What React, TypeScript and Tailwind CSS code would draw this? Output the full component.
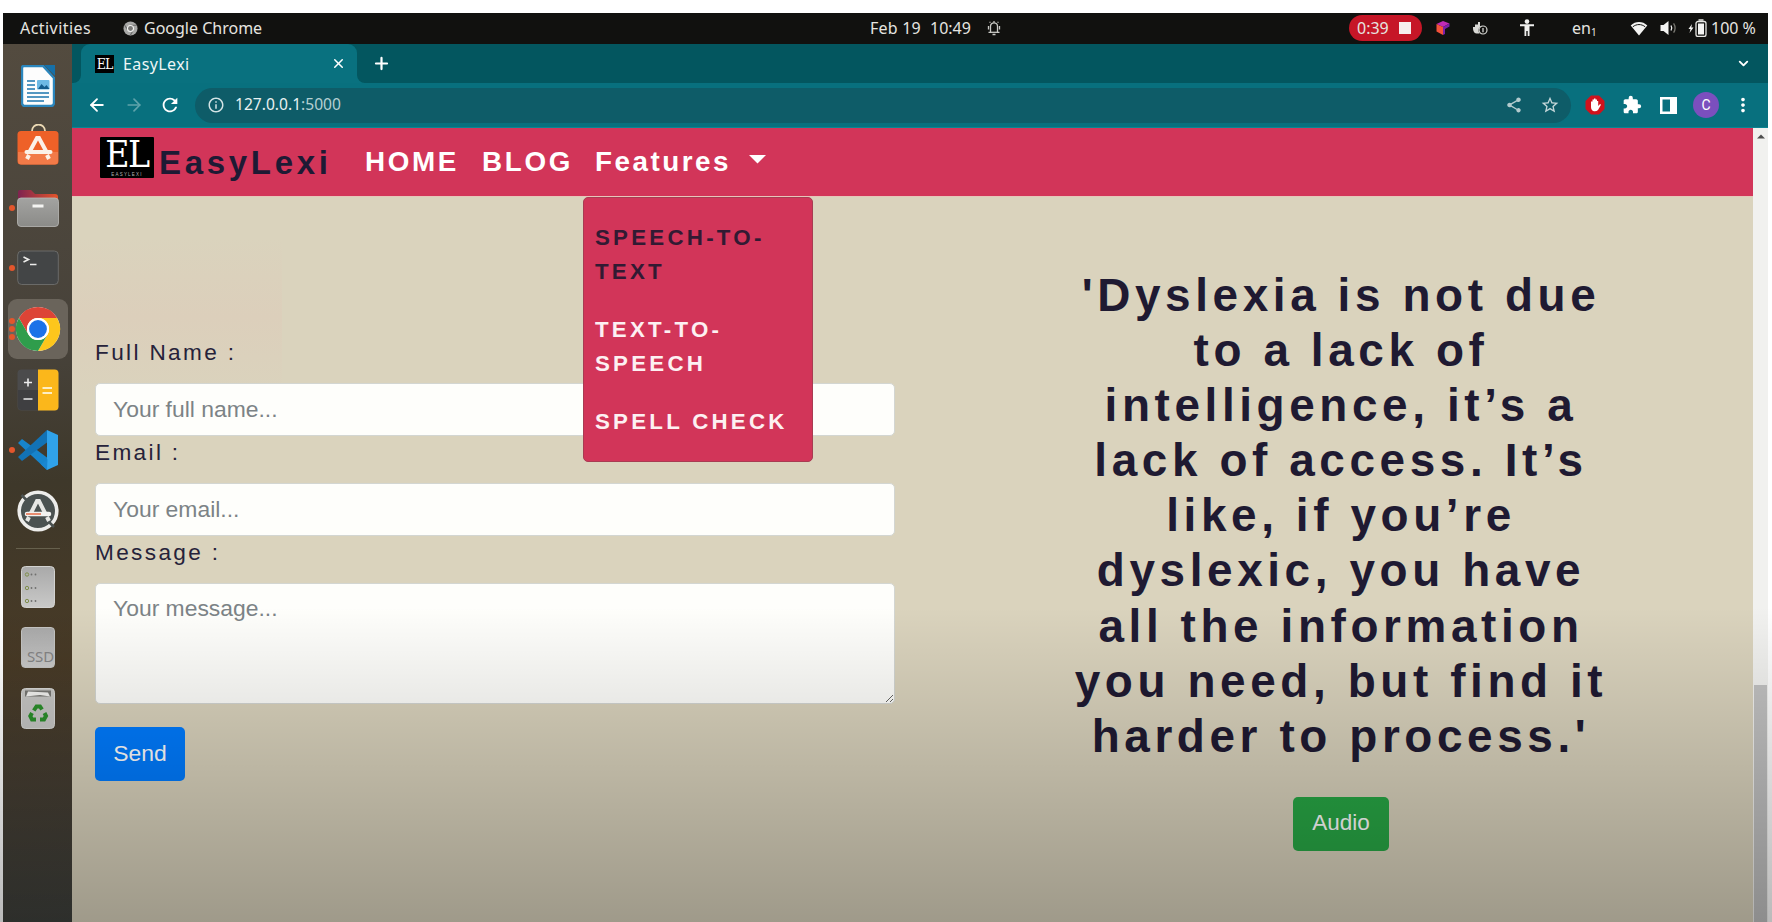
import React from "react";
import { ArrowLeft, ArrowRight, X, Plus, ChevronDown } from "lucide-react";
import { MdExtension, MdRefresh, MdShare, MdStarBorder, MdMoreVert, MdInfoOutline } from "react-icons/md";

const ubuntu = "font-['Noto_Sans',sans-serif]";

function TopBar() {
  return (
    <header className={`flex h-[31px] shrink-0 items-center bg-[#11110f] pb-px text-[16px] leading-none text-[#e6e5e0] ${ubuntu}`}>
      <div className="flex w-[841px] items-center pl-[17px]">
        <span className="w-[103px] tracking-[0.45px]">Activities</span>
        <svg className="mr-[6px]" width="15" height="15" viewBox="0 0 16 16">
          <circle cx="8" cy="8" r="7.5" fill="#a9a9a7" />
          <path d="M8 4.5h7M5 9.5 1.6 4.2M11 9.8 7.6 15.4" stroke="#6b6b69" strokeWidth="1.2" />
          <circle cx="8" cy="8" r="3.8" fill="#f2f2f0" />
          <circle cx="8" cy="8" r="2.6" fill="#777775" />
        </svg>
        <span>Google Chrome</span>
      </div>
      <div className="flex w-[505px] items-center pl-[26px]">
        <span className="w-[60px] tracking-[0.2px]">Feb 19</span>
        <span>10:49</span>
        <svg className="ml-4" width="14" height="16" viewBox="0 0 14 16" fill="none" stroke="#c9c9c5" strokeWidth="1.3">
          <path d="M1.500 12.300h2v-6a3.500 3.500 0 0 1 7 0v6h2M5.500 14.500h3M7 1v1.500M1.500 9.500V6M12.500 9.500V6M2.500 2.500 3.500 2M11.500 2.500 10.500 2" />
          <path d="M4 12.300h6" />
        </svg>
      </div>
      <div className="flex h-[26px] w-[73px] items-center justify-between rounded-full bg-[#c61627] pr-[11px] pl-2">
        <span>0:39</span>
        <span className="size-3 bg-[#f6eeee]" />
      </div>
      <svg className="ml-[14px]" width="14" height="16" viewBox="0 0 14 16">
        <path d="M7 1 13.5 3.5 7 7 .5 4Z" fill="#c02bb4" />
        <path d="M.5 4 7 7v8L.5 11.5Z" fill="#f4513a" />
        <path d="M7 7l6.5-3.5v3L9 9v5l-2 1Z" fill="#7a1fa8" />
      </svg>
      <svg className="ml-[22px]" width="16" height="14" viewBox="0 0 16 14">
        <path d="M1 6h2V3.5h3V1h2v4h2a4.5 4.5 0 0 0-2.500 7.500H4.500C2 12.300 .8 9.500 1 6Z" fill="#d9d9d5" />
        <circle cx="11" cy="9" r="4" fill="#11110f" stroke="#d9d9d5" strokeWidth="1.200" />
        <path d="M11 7v4.200" stroke="#d9d9d5" strokeWidth="1.300" />
      </svg>
      <svg className="ml-[31px]" width="16" height="18" viewBox="0 0 16 18" fill="#f0f0ee">
        <circle cx="8" cy="2.600" r="2.300" />
        <path d="M1 5.200h14v2H10.500V17H8.700v-5H7.300v5H5.500V7.200H1Z" />
      </svg>
      <div className="ml-[37px] flex w-[58px] items-end">
        <span>en</span>
        <span className="text-[10px] leading-[8px]">1</span>
      </div>
      <svg width="18" height="15" viewBox="0 0 18 15">
        <path d="M.7 4.400C5.500-.2 12.500-.2 17.300 4.400L9 14.500Z" fill="#f4f4f2" />
        <path d="M2.800 5.800c3.800-3 8.600-3 12.400 0" stroke="#11110f" strokeWidth="1" fill="none" />
      </svg>
      <svg className="ml-[12px]" width="17" height="16" viewBox="0 0 17 16" fill="none">
        <path d="M.5 5h3L8.500 1v14l-5-4h-3Z" fill="#f4f4f2" />
        <path d="M11 5.500q1.500 2.500 0 5" stroke="#f4f4f2" strokeWidth="1.300" />
        <path d="M13.600 3.300q3 4.700 0 9.400" stroke="#77766f" strokeWidth="1.300" />
      </svg>
      <svg className="ml-[11px]" width="19" height="18" viewBox="0 0 19 18" fill="none">
        <path d="M4 5 .5 10h2L1.500 14 5.500 8.500h-2.200Z" fill="#f4f4f2" />
        <rect x="8" y="2.500" width="10" height="15" rx="2" stroke="#e8e8e4" strokeWidth="1.300" />
        <rect x="10" y="4.500" width="6" height="11" fill="#f4f4f2" />
        <path d="M10.500 1h5" stroke="#e8e8e4" strokeWidth="1.500" />
      </svg>
      <span className="ml-[4px] whitespace-nowrap">100 %</span>
    </header>
  );
}

function DockSlot({ dots = 0, children }: { dots?: number; children: React.ReactNode }) {
  return (
    <div className="flex h-[60.700px] w-full shrink-0 items-center">
      <div className="flex w-[13px] flex-col items-end justify-center gap-[2px] pr-[2px]">
        {Array.from({ length: dots }, (_, i) => (
          <span key={i} className="size-[6px] rounded-full bg-[#e3562c]" />
        ))}
      </div>
      <div className="flex w-[42px] items-center justify-center">{children}</div>
    </div>
  );
}

function Dock() {
  return (
    <aside className="flex w-[69px] shrink-0 flex-col bg-[linear-gradient(175deg,#534b3f_0%,#47423a_35%,#3e382a_50%,#483a26_70%,#443d32_85%,#3e403c_100%)] pt-[12px] pl-px">
      <DockSlot>
        <svg width="34" height="42" viewBox="0 0 34 42">
          <path d="M3 1h19l11 12v25a3 3 0 0 1-3 3H4a3 3 0 0 1-3-3V3a2 2 0 0 1 2-2Z" fill="#fdfdfd" stroke="#2b86bd" strokeWidth="2.400" />
          <path d="M23 0h11v11Z" fill="#1670a8" />
          <path d="M6 16h8M6 20h8M6 24h8M6 28h22M6 32h22M6 36h17" stroke="#1d75ad" strokeWidth="1.700" />
          <rect x="16" y="15" width="12.500" height="9.500" rx="1" fill="#6db9e4" />
          <path d="m17 24 3.500-5 3 3 2-2 3 4Z" fill="#145c8c" />
        </svg>
      </DockSlot>
      <DockSlot>
        <svg className="-mt-1" width="42" height="42" viewBox="0 0 42 42">
          <path d="M15 9V7a6 6 0 0 1 13 0v2" fill="none" stroke="#ebd9b4" strokeWidth="1.800" />
          <rect x=".5" y="7" width="41" height="33.500" rx="3.500" fill="#ee6128" />
          <path d="M1 28h40v9a3.500 3.500 0 0 1-3.500 3.500h-33A3.500 3.500 0 0 1 1 37Z" fill="#f27a48" />
          <g stroke="#fbf1e8" fill="none">
            <path d="M13 27 20 14h2l7 13" strokeWidth="4" />
            <path d="M9.500 28h24" strokeWidth="4" strokeLinecap="round" />
            <path d="m12 31-2 4M30 31l2 4" strokeWidth="4" />
          </g>
        </svg>
      </DockSlot>
      <DockSlot dots={1}>
        <svg width="42" height="38" viewBox="0 0 42 38">
          <defs>
            <linearGradient id="folder" x2="1"><stop stopColor="#7e2350" /><stop offset="1" stopColor="#e4542a" /></linearGradient>
            <linearGradient id="drawer" x2="0" y2="1"><stop stopColor="#a3a3a1" /><stop offset="1" stopColor="#8b8b88" /></linearGradient>
          </defs>
          <path d="M1 12V3a2 2 0 0 1 2-2h11l4 4h20a3 3 0 0 1 3 3v6Z" fill="url(#folder)" />
          <rect x=".5" y="9" width="41" height="28.500" rx="3.500" fill="url(#drawer)" stroke="#b9b9b6" strokeWidth=".8" />
          <path d="M15.500 17h11" stroke="#f4f4f2" strokeWidth="3" />
        </svg>
      </DockSlot>
      <DockSlot dots={1}>
        <svg width="42" height="36" viewBox="0 0 42 36" fill="none">
          <rect x=".7" y="1" width="40.600" height="33.500" rx="4" fill="#434546" stroke="#6a6a68" />
          <path d="m6.500 7 5 2.500-5 2.500M13 14.500h6.500" stroke="#ececea" strokeWidth="1.600" />
        </svg>
      </DockSlot>
      <div className="flex h-[60.700px] w-full items-center px-1">
        <div className="flex h-[60px] w-[60px] shrink-0 items-center rounded-[9px] bg-[#6a645b]">
          <div className="flex w-[7px] flex-col gap-[2px] pl-[1px]">
            <span className="size-[6px] rounded-full bg-[#e3562c]" />
            <span className="size-[6px] rounded-full bg-[#e3562c]" />
            <span className="size-[6px] rounded-full bg-[#e3562c]" />
          </div>
          <svg width="46" height="46" viewBox="0 0 48 48">
            <circle cx="24" cy="24" r="23" fill="#fff" />
            <path d="M4.080 12.500A23 23 0 0 1 43.920 12.500H24A11.500 11.500 0 0 0 14.040 29.750Z" fill="#dd4436" />
            <path d="M43.920 12.500A23 23 0 0 1 24 47L33.960 29.750A11.500 11.500 0 0 0 24 12.500Z" fill="#fdc61c" />
            <path d="M24 47A23 23 0 0 1 4.080 12.500L14.040 29.750A11.500 11.500 0 0 0 33.960 29.750Z" fill="#2f9d4c" />
            <circle cx="24" cy="24" r="11.500" fill="#fff" />
            <circle cx="24" cy="24" r="9.300" fill="#1b72e8" />
          </svg>
        </div>
      </div>
      <DockSlot>
        <svg width="42" height="42" viewBox="0 0 42 42" fill="none">
          <rect x=".5" y=".5" width="41" height="41" rx="4" fill="#4b4b4c" />
          <path d="M1 21h20v20H4.500A3.500 3.500 0 0 1 1 37.500Z" fill="#3f3f41" />
          <path d="M21 .5h16.500a4 4 0 0 1 4 4v33a4 4 0 0 1-4 4H21Z" fill="#fbb71b" />
          <path d="M7 13.500h8M11 9.500v8M6.500 30h9" stroke="#ececec" strokeWidth="1.600" />
          <path d="M25.500 19h9.500M25.500 24h9.500" stroke="#fdeec4" strokeWidth="1.800" />
        </svg>
      </DockSlot>
      <DockSlot dots={1}>
        <svg width="42" height="42" viewBox="0 0 42 42">
          <path d="M30 41 1 14l4-4 27 20Z" fill="#1784cb" />
          <path d="M30 1 1 28l4 4 27-20Z" fill="#1272b5" />
          <path d="m30 1 11 5v30l-11 5Z" fill="#30a2ea" />
          <path d="m30 41-6-5.600L30.500 30Z" fill="#1a86d0" />
        </svg>
      </DockSlot>
      <DockSlot>
        <svg width="42" height="42" viewBox="0 0 42 42" fill="none">
          <circle cx="21" cy="21" r="18.800" fill="#4b5251" stroke="#ededeb" strokeWidth="3.600" />
          <path d="m4.500 5 5 5M32 32l5 5" stroke="#4b5251" strokeWidth="2.600" />
          <path d="M13.500 24 20 11h2l6.500 13" stroke="#e6e6e3" strokeWidth="4" />
          <path d="M10 24h22" stroke="#f2f2f0" strokeWidth="4.500" strokeLinecap="round" />
          <path d="M9 24h15" stroke="#e3562c" strokeWidth="1.300" />
          <path d="m12 27-2 4M30 27l2 4" stroke="#e6e6e3" strokeWidth="4" />
        </svg>
      </DockSlot>
      <div className="mx-auto mt-[6px] mb-[8px] h-px w-11 shrink-0 bg-[#66604d]" />
      <DockSlot>
        <svg width="34" height="42" viewBox="0 0 34 42">
          <defs>
            <linearGradient id="disk" x2="0" y2="1"><stop stopColor="#a9a9a9" /><stop offset="1" stopColor="#c9c9c8" /></linearGradient>
          </defs>
          <rect x=".5" y=".5" width="33" height="41" rx="4" fill="url(#disk)" stroke="#d2d2d0" />
          {[8.5, 22, 35].map((y) => (
            <g key={y}>
              <circle cx="6" cy={y} r="1.700" fill="none" stroke="#7f8f4c" />
              <circle cx="10.500" cy={y} r=".9" fill="#6f6f6e" />
              <circle cx="14.500" cy={y} r=".9" fill="#6f6f6e" />
            </g>
          ))}
        </svg>
      </DockSlot>
      <DockSlot>
        <div className="flex h-[41px] w-[34px] items-end justify-end rounded-[4px] border border-[#c4c4c2] bg-linear-to-b from-[#a9a9a9] to-[#c9c9c8] pb-[4px]">
          <span className={`text-[15px] leading-[14px] tracking-[-0.1px] text-[#858585] ${ubuntu}`}>SSD</span>
        </div>
      </DockSlot>
      <DockSlot>
        <svg width="34" height="41" viewBox="0 0 34 41">
          <rect x=".5" y=".5" width="33" height="40" rx="4" fill="#c6c6c4" stroke="#d8d8d6" />
          <path d="M4 2.500h26v6H4Z" fill="#777773" />
          <path d="M5 8.500 7 3.500l20 1 2 4-10-1.500Z" fill="#f2f2f0" />
          <g fill="none" stroke="#2b8f2b" strokeWidth="4">
            <path d="m12.800 22.500 2.700-4h3.500l2 3" />
            <path d="m23.500 25 1.500 3-2 3.500h-4" />
            <path d="M15 31.500h-4L9.300 28l1.700-3" />
          </g>
        </svg>
      </DockSlot>
    </aside>
  );
}

function TabStrip() {
  return (
    <div className="flex h-[39px] shrink-0 bg-[#09717f]">
      <div className="w-[9px] rounded-br-[8px] bg-[#03565f]" />
      <div className="flex flex-col bg-[#03565f]">
        <div className="flex h-[39px] w-[276px] items-center rounded-t-[9px] bg-[#09717f] pl-[14px]">
          <div className="flex h-[18px] w-[19px] items-center justify-center bg-black font-['DejaVu_Serif_Condensed','DejaVu_Serif',serif] text-[14px] leading-none tracking-[-1px] text-white">
            EL
          </div>
          <span className={`ml-[9px] text-[16px] tracking-[0.4px] text-[#eef6f6] ${ubuntu}`}>EasyLexi</span>
          <X className="mr-[11px] ml-auto" size={15} strokeWidth={2.400} color="#fff" />
        </div>
      </div>
      <div className="flex flex-1 items-center justify-between rounded-bl-[8px] bg-[#03565f] pr-[17px] pl-[15px]">
        <Plus size={19} strokeWidth={2.800} color="#fff" />
        <ChevronDown size={15} strokeWidth={3} color="#fff" />
      </div>
    </div>
  );
}

function Toolbar() {
  return (
    <div className="flex h-[45px] shrink-0 items-center border-b border-[#0b8493] bg-[#08707e] pl-[15px]">
      <ArrowLeft size={20} strokeWidth={2.200} color="#fff" />
      <ArrowRight className="ml-[17px]" size={20} strokeWidth={2} color="#5fa3ab" />
      <MdRefresh className="ml-[15px]" size={22} color="#fff" />
      <div className="ml-[14px] flex h-[35px] w-[1376px] items-center rounded-full bg-[#0e5c68] pl-[12px]">
        <MdInfoOutline size={18} color="#d3e3e4" />
        <span className={`ml-[10px] text-[15.600px] text-[#e8f1f1] ${ubuntu}`}>
          127.0.0.1<span className="text-[#b4cfd2]">:5000</span>
        </span>
        <MdShare className="ml-auto" size={18} color="#b3cbce" />
        <MdStarBorder className="mr-[11px] ml-[17px]" size={20} color="#c3d6d8" />
      </div>
      <svg className="ml-[14px]" width="20" height="20" viewBox="0 0 20 20">
        <path d="M6 .5h8L19.500 6v8L14 19.500H6L.5 14V6Z" fill="#d0121c" />
        <path d="M6 10V6.500h1.500V4.500H9V3.500h1.500v1H12V6h1.200v5l1.800-2 1 .8-3 5.200Q11.500 16.500 9 16.200 6 15.500 6 12Z" fill="#fff" />
      </svg>
      <MdExtension className="ml-[17px]" size={20} color="#fff" />
      <svg className="ml-[18px]" width="17" height="17" viewBox="0 0 17 17">
        <path d="M0 0h17v17H0Zm2.500 2.500v12h7.500v-12Z" fill="#fff" fillRule="evenodd" />
      </svg>
      <div className="ml-[16px] flex size-[26px] items-center justify-center rounded-full bg-[#7b4fbe] font-['Roboto',sans-serif] text-[14px] text-white">C</div>
      <MdMoreVert className="ml-[13px]" size={22} color="#fff" />
    </div>
  );
}

const menuItems = [
  { lines: ["SPEECH-TO-", "TEXT"], active: true },
  { lines: ["TEXT-TO-", "SPEECH"], active: false },
  { lines: ["SPELL CHECK"], active: false },
];

function Navbar() {
  return (
    <nav className="flex h-[69px] shrink-0 items-center border-b border-[#e6c6b9] bg-[#d23559] pl-[28px] font-['Liberation_Sans',sans-serif] font-bold whitespace-nowrap">
      <div className="-mt-[9px] flex h-[41px] w-[54px] flex-col items-center rounded-[1px] bg-black text-white">
        <span className="h-[35px] font-['DejaVu_Serif_Condensed','DejaVu_Serif',serif] text-[37px] leading-[35px] font-normal tracking-[-1.500px]">EL</span>
        <span className="text-[4.500px] leading-[5px] font-normal tracking-[1.200px] text-[#b5b5b5]">EASYLEXI</span>
      </div>
      <span className="w-[211px] pt-px pl-[5px] text-[33px] tracking-[3.700px] text-[#1e1a34]">EasyLexi</span>
      <span className="w-[117px] text-[27.800px] tracking-[2.600px] text-white">HOME</span>
      <span className="w-[113px] text-[27.800px] tracking-[2.700px] text-white">BLOG</span>
      <div className="relative flex items-center">
        <span className="w-[154px] text-[27.800px] tracking-[2.500px] text-white">Features</span>
        <svg width="17" height="9" viewBox="0 0 17 9" className="mb-[5px]">
          <path d="M0 0h17L8.500 8.500Z" fill="#fff" />
        </svg>
        <div className="absolute top-[56px] left-[-12px] z-10 flex h-[265px] w-[230px] flex-col rounded-[5px] border border-[#a93b52] bg-[#d23559] pt-[11px]">
          {menuItems.map((item) => (
            <div
              key={item.lines[0]}
              className={`flex flex-col py-[12.200px] pl-[11px] text-[22.300px] leading-[33.650px] tracking-[3.250px] ${item.active ? "text-[#321a33]" : "text-[#fdf0f2]"}`}
            >
              {item.lines.map((l) => (
                <span key={l}>{l}</span>
              ))}
            </div>
          ))}
        </div>
      </div>
    </nav>
  );
}

const quote = [
  "'Dyslexia is not due",
  "to a lack of",
  "intelligence, it’s a",
  "lack of access. It’s",
  "like, if you’re",
  "dyslexic, you have",
  "all the information",
  "you need, but find it",
  "harder to process.'",
];

const labelClass = "h-[34px] mb-[13px] text-[22.600px] leading-[34px] tracking-[2.350px] text-[#26223a]";
const fieldClass =
  "block w-[800px] shrink-0 rounded-[5px] border border-[#d3d6d2] bg-[#fefefb] px-[17px] text-[22.900px] text-[#495057] placeholder:text-[#7c8386] placeholder:opacity-100";

function ContactForm() {
  return (
    <form className="flex w-[822px] shrink-0 flex-col items-start bg-[linear-gradient(180deg,#dad3bd_20%,#dccfbb_60%,#dad3bd_100%)] bg-[length:210px_200px] bg-no-repeat pt-[138.500px] pl-[23px] font-['Liberation_Sans',sans-serif]">
      <label className={labelClass}>Full Name :</label>
      <input className={`${fieldClass} h-[53px]`} placeholder="Your full name..." />
      <label className={labelClass}>Email :</label>
      <input className={`${fieldClass} h-[53px]`} placeholder="Your email..." />
      <label className={labelClass}>Message :</label>
      <textarea className={`${fieldClass} h-[121px] pt-[8px] leading-[33px]`} placeholder="Your message..." />
      <button type="button" className="mt-[23px] h-[54px] w-[90px] rounded-[5px] bg-[#007bff] text-[22.900px] text-white">
        Send
      </button>
    </form>
  );
}

export default function App() {
  return (
    <div className="relative flex h-[922px] w-[1772px] flex-col overflow-hidden bg-white pt-[13px] pr-[4px] pl-[3px]">
      <TopBar />
      <div className="flex min-h-0 flex-1">
        <Dock />
        <div className="flex min-w-0 flex-1 flex-col">
          <TabStrip />
          <Toolbar />
          <div className="flex min-h-0 flex-1">
            <main className="flex w-[1681px] shrink-0 flex-col bg-[#dad3bd]">
              <Navbar />
              <div className="flex min-h-0 flex-1">
                <ContactForm />
                <section className="flex flex-1 flex-col items-center pt-[71px] pl-[35px] font-['Liberation_Sans',sans-serif]">
                  <h1 className="flex flex-col items-center text-[45.900px] leading-[55.100px] font-bold tracking-[4.600px] whitespace-nowrap text-[#1f1a32]">
                    {quote.map((line) => (
                      <span key={line}>{line}</span>
                    ))}
                  </h1>
                  <button type="button" className="mt-[33px] h-[54px] w-[96px] shrink-0 rounded-[5px] bg-[#28a745] pb-[2px] text-[22.500px] text-white">
                    Audio
                  </button>
                </section>
              </div>
            </main>
            <div className="flex flex-1 flex-col items-center bg-[#f1f1ef]">
              <svg className="mt-[6px]" width="8" height="5" viewBox="0 0 8 5">
                <path d="M0 4.500h8L4 .5Z" fill="#4d4d4d" />
              </svg>
              <div className="mt-[546px] w-[13px] flex-1 bg-[#c1c1c1]" />
            </div>
          </div>
        </div>
      </div>
      <div className="pointer-events-none absolute inset-x-0 bottom-0 z-20 h-[315px] bg-linear-to-b from-black/0 to-black/27" />
    </div>
  );
}
